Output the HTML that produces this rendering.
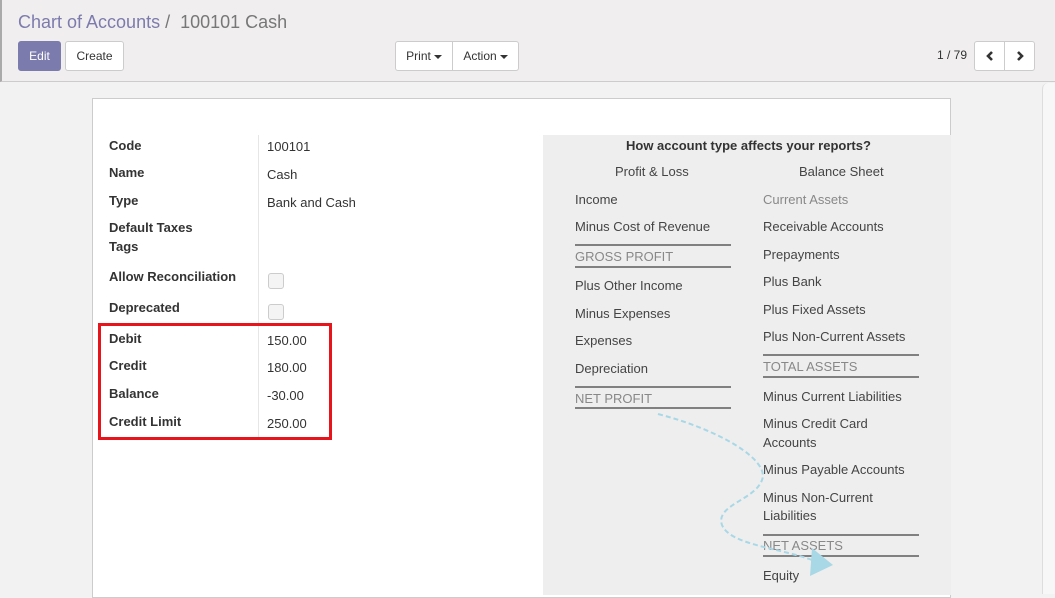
<!DOCTYPE html>
<html><head><style>
*{margin:0;padding:0;box-sizing:border-box}
body{width:1055px;height:594px;overflow:hidden;background:#f2f2f2;font-family:"Liberation Sans",sans-serif;font-size:13px;color:#4c4c4c;position:relative}
.cp{position:absolute;left:0;top:0;width:1055px;height:82px;background:#f0eeee;border-bottom:1px solid #ccc;border-left:2px solid #aaa}
.a{position:absolute;white-space:nowrap}
.btn{position:absolute;height:30px;border:1px solid #ccc;background:#fff;border-radius:3px;font-size:12px;line-height:28px;text-align:center;color:#333}
.sheet{position:absolute;left:92px;top:98px;width:859px;height:500px;background:#fff;border:1px solid #ccc}
.lbl{position:absolute;left:109px;font-weight:bold;font-size:13px;color:#333}
.val{position:absolute;left:267px;font-size:13px;color:#333}
.panel{position:absolute;left:543px;top:135px;width:408px;height:460px;background:#eee}
.r{position:absolute;font-size:13px;color:#444;white-space:nowrap}
.g{color:#888}
.hr{position:absolute;height:2px;background:#808080}
.cb{position:absolute;left:268px;width:16px;height:16px;border:1px solid #ccc;border-radius:3px;background:#f4f4f4}
.car{display:inline-block;border-left:4px solid transparent;border-right:4px solid transparent;border-top:4px solid #333;vertical-align:middle;margin-left:3px}
.btn svg{position:absolute;left:10px;top:8px}
</style></head><body>
<div class="cp"></div>
<div style="position:absolute;left:1042px;top:83px;width:13px;height:511px;background:#f7f7f7;border-left:1px solid #ddd;border-radius:6px 0 0 0"></div>
<div class="a" style="left:18px;top:12px;font-size:18px;color:#7c7bad">Chart of Accounts <span style="color:#777">/&nbsp; 100101 Cash</span></div>
<div class="btn" style="left:18px;top:41px;width:43px;background:#7c7bad;border-color:#7c7bad;color:#fff">Edit</div>
<div class="btn" style="left:65px;top:41px;width:59px">Create</div>
<div class="btn" style="left:395px;top:41px;width:58px;border-radius:3px 0 0 3px">Print<span class="car"></span></div>
<div class="btn" style="left:452px;top:41px;width:67px;border-radius:0 3px 3px 0">Action<span class="car"></span></div>
<div class="a" style="left:937px;top:48px;font-size:12px;color:#333">1 / 79</div>
<div class="btn" style="left:974px;top:41px;width:31px;border-radius:3px 0 0 3px"><svg width="10" height="12"><path d="M7 2 L3 6 L7 10" fill="none" stroke="#333" stroke-width="2.6"/></svg></div>
<div class="btn" style="left:1004px;top:41px;width:31px;border-radius:0 3px 3px 0"><svg width="10" height="12"><path d="M3 2 L7 6 L3 10" fill="none" stroke="#333" stroke-width="2.6"/></svg></div>
<div class="sheet"></div>
<div style="position:absolute;left:258px;top:135px;width:1px;height:304px;background:#e6e6e6"></div>
<div class="lbl" style="top:138px">Code</div><div class="val" style="top:139px">100101</div>
<div class="lbl" style="top:165px">Name</div><div class="val" style="top:167px">Cash</div>
<div class="lbl" style="top:193px">Type</div><div class="val" style="top:195px">Bank and Cash</div>
<div class="lbl" style="top:220px">Default Taxes</div>
<div class="lbl" style="top:239px">Tags</div>
<div class="lbl" style="top:269px">Allow Reconciliation</div><div class="cb" style="top:273px"></div>
<div class="lbl" style="top:300px">Deprecated</div><div class="cb" style="top:304px"></div>
<div class="lbl" style="top:331px">Debit</div><div class="val" style="top:333px">150.00</div>
<div class="lbl" style="top:358px">Credit</div><div class="val" style="top:360px">180.00</div>
<div class="lbl" style="top:386px">Balance</div><div class="val" style="top:388px">-30.00</div>
<div class="lbl" style="top:414px">Credit Limit</div><div class="val" style="top:416px">250.00</div>
<div style="position:absolute;left:98px;top:323px;width:234px;height:117px;border:3px solid #e8141b"></div>
<div class="panel"></div>
<div class="r" style="left:626px;top:138px;font-weight:bold;color:#333">How account type affects your reports?</div>
<div class="r" style="left:615px;top:164px">Profit &amp; Loss</div>
<div class="r" style="left:799px;top:164px">Balance Sheet</div>
<div class="r" style="left:575px;top:192px">Income</div>
<div class="r" style="left:575px;top:219px">Minus Cost of Revenue</div>
<div class="hr" style="left:575px;top:244px;width:156px"></div>
<div class="r g" style="left:575px;top:249px">GROSS PROFIT</div>
<div class="hr" style="left:575px;top:266px;width:156px"></div>
<div class="r" style="left:575px;top:278px">Plus Other Income</div>
<div class="r" style="left:575px;top:306px">Minus Expenses</div>
<div class="r" style="left:575px;top:333px">Expenses</div>
<div class="r" style="left:575px;top:361px">Depreciation</div>
<div class="hr" style="left:575px;top:386px;width:156px"></div>
<div class="r g" style="left:575px;top:391px">NET PROFIT</div>
<div class="hr" style="left:575px;top:407px;width:156px"></div>
<div class="r g" style="left:763px;top:192px">Current Assets</div>
<div class="r" style="left:763px;top:219px">Receivable Accounts</div>
<div class="r" style="left:763px;top:247px">Prepayments</div>
<div class="r" style="left:763px;top:274px">Plus Bank</div>
<div class="r" style="left:763px;top:302px">Plus Fixed Assets</div>
<div class="r" style="left:763px;top:329px">Plus Non-Current Assets</div>
<div class="hr" style="left:763px;top:354px;width:156px"></div>
<div class="r g" style="left:763px;top:359px">TOTAL ASSETS</div>
<div class="hr" style="left:763px;top:376px;width:156px"></div>
<div class="r" style="left:763px;top:389px">Minus Current Liabilities</div>
<div class="r" style="left:763px;top:416px">Minus Credit Card</div>
<div class="r" style="left:763px;top:435px">Accounts</div>
<div class="r" style="left:763px;top:462px">Minus Payable Accounts</div>
<div class="r" style="left:763px;top:490px">Minus Non-Current</div>
<div class="r" style="left:763px;top:508px">Liabilities</div>
<div class="hr" style="left:763px;top:534px;width:156px"></div>
<div class="r g" style="left:763px;top:538px">NET ASSETS</div>
<div class="hr" style="left:763px;top:555px;width:156px"></div>
<div class="r" style="left:763px;top:568px">Equity</div>
<svg style="position:absolute;left:0;top:0" width="1055" height="594"><path d="M658 414 C720 430 770 460 762 480 C755 500 715 505 722 525 C730 545 780 548 812 560" fill="none" stroke="#a8d8e6" stroke-width="2" stroke-dasharray="5,3"/><polygon points="812,548 833,565 810,576" fill="#a8d8e6"/></svg>
</body></html>
